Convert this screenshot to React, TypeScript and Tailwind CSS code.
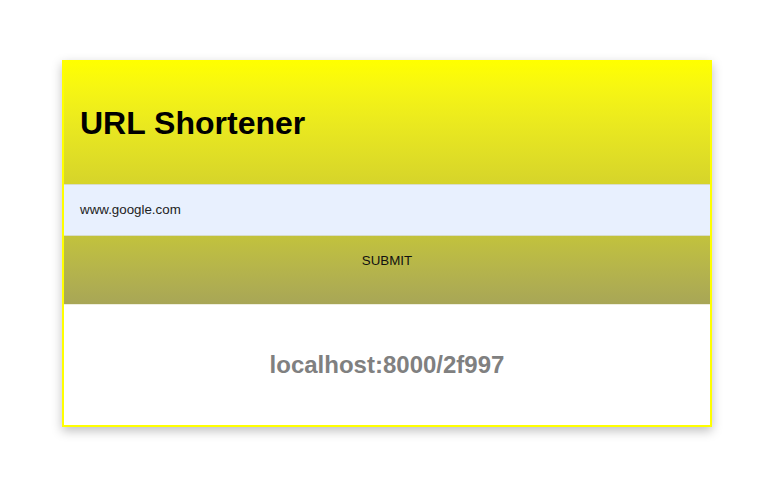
import React from "react";

export default function App() {
  return (
    <div className="min-h-[494px] w-[760px] bg-white pt-[60px] pl-[62px]" style={{ fontFamily: '"Liberation Sans", Arial, sans-serif' }}>
      <div className="flex w-[650px] flex-col border-2 border-[#ffff00] bg-white shadow-[0_4px_10px_rgba(0,0,0,0.25)]">
        <div className="flex h-[122px] items-center bg-gradient-to-b from-[#ffff00] to-[#d6d42a] px-4">
          <h1 className="text-[32px] font-bold text-black">URL Shortener</h1>
        </div>
        <div className="flex h-[52px] items-center border-y border-[#d8dcc8] bg-[#e8f0fe] px-4 text-[13.33px] text-[#222]">
          www.google.com
        </div>
        <div className="flex h-[68px] items-start justify-center bg-gradient-to-b from-[#c2c23c] to-[#a8a656] pt-[17px] text-[13.33px] leading-[16px] text-[#111]">
          SUBMIT
        </div>
        <div className="flex h-[121px] items-center justify-center border-t border-[#eeeedd] bg-white">
          <span className="text-[24px] font-bold text-[#808080]">localhost:8000/2f997</span>
        </div>
      </div>
    </div>
  );
}
